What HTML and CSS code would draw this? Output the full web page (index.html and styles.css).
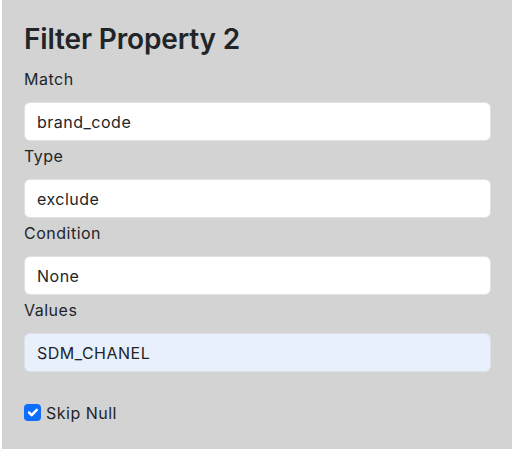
FILE: index.html
```html
<!DOCTYPE html>
<html lang="en">
<head>
<meta charset="utf-8">
<title>Filter Property 2</title>
<link rel="stylesheet" href="styles.css">
</head>
<body>
<div class="panel">
  <h3 class="title">Filter Property 2</h3>
  <div class="field">
    <label class="label">Match</label>
    <div class="control">brand_code</div>
  </div>
  <div class="field">
    <label class="label">Type</label>
    <div class="control">exclude</div>
  </div>
  <div class="field">
    <label class="label">Condition</label>
    <div class="control">None</div>
  </div>
  <div class="field">
    <label class="label">Values</label>
    <div class="control control-filled">SDM_CHANEL</div>
  </div>
  <div class="check">
    <span class="check-box"><svg viewBox="0 0 20 20" width="17" height="17"><path d="M6 10l3 3l6-6" fill="none" stroke="#fff" stroke-width="3" stroke-linecap="round" stroke-linejoin="round"/></svg></span>
    <span class="check-label">Skip Null</span>
  </div>
</div>
</body>
</html>
```

FILE: styles.css
```css
html, body {
  margin: 0;
  padding: 0;
  background: #ffffff;
}
body {
  font-family: Inter, "Noto Sans", "Liberation Sans", sans-serif;
  color: #212529;
  font-size: 16px;
  line-height: 24px;
  letter-spacing: 0.5px;
}
.panel {
  margin-left: 2px;
  background: #d3d3d3;
  padding: 23px 21px 0 22px;
  height: 426px;
}
.title {
  margin: 0 0 10px 0;
  font-size: 28px;
  font-weight: 600;
  line-height: 33.6px;
  letter-spacing: -0.15px;
}
.field {
  display: block;
}
.label {
  display: block;
  line-height: 24px;
  margin-top: 3px;
  margin-bottom: 11px;
}
.control {
  box-sizing: border-box;
  height: 39px;
  padding: 7px 12px;
  border: 1px solid #dee2e6;
  border-radius: 6px;
  background: #ffffff;
  line-height: 24px;
}
.control-filled {
  background: #e8f0fe;
}
.check {
  display: flex;
  align-items: center;
  gap: 5px;
  margin-top: 29px;
}
.check-box {
  display: flex;
  width: 17px;
  height: 17px;
  background: #0d6efd;
  border-radius: 4px;
}
.check-label {
  line-height: 24px;
}
```
